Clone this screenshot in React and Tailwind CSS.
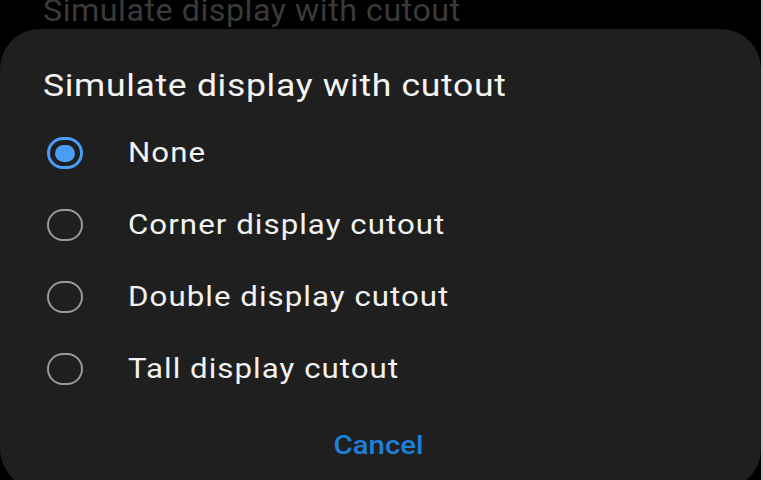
import React from 'react'

const options = [
    'None',
    'Corner display cutout',
    'Double display cutout',
    'Tall display cutout',
]

function Radio({ checked }) {
    if (checked) {
        return (
            <div className="w-[36px] h-[32px] rounded-full border-[3px] border-[#4a9df6] flex items-center justify-center">
                <div className="w-[20px] h-[17px] rounded-full bg-[#4a9df6]" />
            </div>
        )
    }
    return <div className="w-[36px] h-[32px] rounded-full border-2 border-[#9a9a9a]" />
}

export default function App() {
    const [selected, setSelected] = React.useState(0)

    return (
        <div className="w-[763px] h-[480px] bg-black overflow-hidden flex relative" style={{ fontFamily: 'Roboto, "Noto Sans", sans-serif' }}>
            <div className="absolute left-[43px] top-[-12px] text-[31px] text-[#3a3a3a] tracking-[0.5px] origin-left scale-x-[1.04]">Simulate display with cutout</div>
            <div className="w-[761px] mt-[29px] h-[460px] bg-[#1f1f1f] rounded-[40px] relative flex flex-col">
                <div className="pl-[43px] pt-[38px] text-[31px] leading-[38px] text-[#f4f4f4] tracking-[0.6px]">
                    <span className="inline-block origin-left scale-x-[1.146]">Simulate display with cutout</span>
                </div>
                <div className="mt-[12px] flex flex-col">
                    {options.map((o, i) => (
                        <button key={o} onClick={() => setSelected(i)} className="h-[72px] flex items-center pl-[47px] text-left">
                            <Radio checked={selected === i} />
                            <span className="ml-[45px] text-[27px] text-[#f2f2f2] tracking-[0.9px] inline-block origin-left scale-x-[1.157]">{o}</span>
                        </button>
                    ))}
                </div>
                <div className="mt-[21px] flex justify-center">
                    <button className="text-[26px] font-medium text-[#1d80d8] pr-[4px] scale-x-[1.13]">Cancel</button>
                </div>
            </div>
            <div className="w-[2px] bg-[#c8c8c8]" />
        </div>
    )
}
